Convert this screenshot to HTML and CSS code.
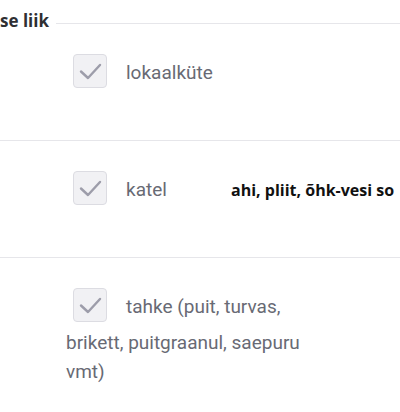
FILE: index.html
```html
<!DOCTYPE html>
<html lang="et">
<head>
<meta charset="utf-8">
<title>Kütteseadme liik</title>
<link rel="stylesheet" href="styles.css">
</head>
<body>
<fieldset class="group">
  <div class="legend">
    <span class="legend-text">se liik</span>
    <span class="legend-rule"></span>
  </div>

  <div class="opt">
    <label class="label"><span class="box"><svg viewBox="0 0 34 34" width="34" height="34"><path d="M8 17.5 L15 24 L27 11" /></svg></span>lokaalküte</label>
  </div>

  <div class="opt with-note">
    <label class="label"><span class="box"><svg viewBox="0 0 34 34" width="34" height="34"><path d="M8 17.5 L15 24 L27 11" /></svg></span>katel</label>
    <span class="note">ahi, pliit, õhk-vesi so</span>
  </div>

  <div class="opt">
    <label class="label"><span class="box"><svg viewBox="0 0 34 34" width="34" height="34"><path d="M8 17.5 L15 24 L27 11" /></svg></span>tahke (puit, turvas, brikett, puitgraanul, saepuru vmt)</label>
  </div>
</fieldset>
</body>
</html>
```

FILE: styles.css
```css
html, body {
  margin: 0;
  padding: 0;
  background: #ffffff;
}

body {
  width: 400px;
  height: 412px;
  overflow: hidden;
  font-family: Roboto, "Noto Sans", sans-serif;
}

.group {
  margin: 0;
  padding: 0;
  border: 0;
  min-width: 0;
}

.legend {
  display: flex;
  align-items: flex-end;
  gap: 7px;
  height: 24px;
}

.legend-text {
  font-family: "Open Sans", "Noto Sans", sans-serif;
  font-weight: 700;
  font-size: 17px;
  line-height: 20px;
  color: #2f2f33;
  margin-bottom: -7px;
  white-space: nowrap;
}

.legend-rule {
  flex: 1;
  height: 1px;
  background: #e6e6ea;
}

.opt {
  min-height: 56px;
  padding: 30px 0 30px 66px;
  border-bottom: 1px solid #e6e6ea;
}

.label {
  display: block;
  width: 250px;
  font-size: 19px;
  line-height: 29px;
  color: #686a74;
}

.box {
  display: inline-block;
  box-sizing: border-box;
  width: 34px;
  height: 34px;
  margin: 0 19px 6px 7px;
  vertical-align: -15px;
  border: 1.5px solid #dcdce2;
  border-radius: 4px;
  background: #f1f1f4;
}

.box svg {
  display: block;
  margin: -1.5px;
  fill: none;
  stroke: #9d9daa;
  stroke-width: 2.4;
  stroke-linecap: round;
  stroke-linejoin: round;
}

.with-note {
  display: flex;
  align-items: baseline;
  white-space: nowrap;
}

.with-note .label {
  flex: 0 0 165px;
}

.note {
  font-family: "Open Sans", "Noto Sans", sans-serif;
  font-weight: 700;
  font-size: 16px;
  color: #111111;
}
```
